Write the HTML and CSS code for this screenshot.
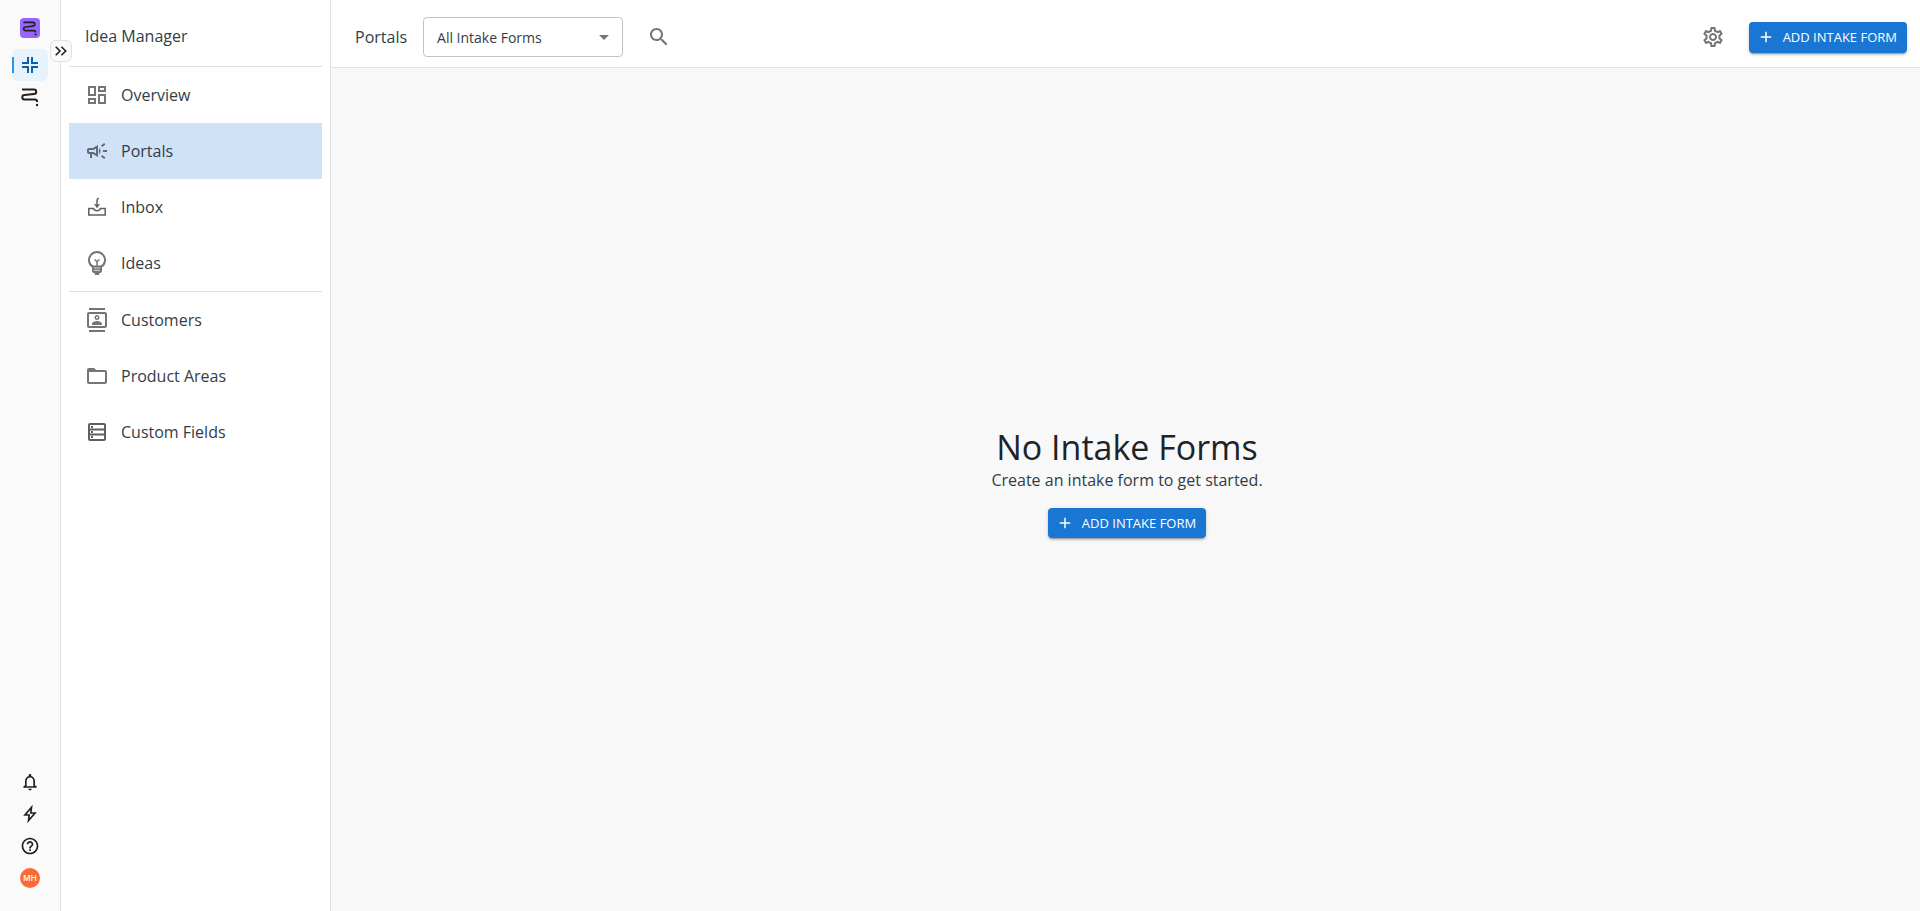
FILE: index.html
```html
<!DOCTYPE html>
<html lang="en">
<head>
  <meta charset="UTF-8" />
  <meta name="viewport" content="width=device-width, initial-scale=1.0"/>
  <title>Idea Manager</title>
  <link rel="stylesheet" href="styles.css">
</head>
<body>
  <aside class="rail">
    <div class="rail-group">
      <a href="#" class="logo">
        <svg width="20" height="20" viewBox="0 0 20 20"><path d="M3.500 4.300h9.300a1.900 1.900 0 0 1 0 3.800l-7.300.9a1.800 1.800 0 0 0 0 3.600h8.500q1.500 0 1.500 1.500v.5" /><circle cx="15.500" cy="16.500" r="1.100" /></svg>
      </a>
      <a href="#" class="rail-link active">
        <svg width="16" height="16" viewBox="0 0 16 16"><path d="M6 0v6H0M10 0v6h6M6 16v-6H0M10 16v-6h6" /></svg>
      </a>
      <a href="#" class="rail-link roadmap">
        <svg width="18" height="20" viewBox="0 0 18 20"><path d="M1 2.500h12a2.200 2.200 0 0 1 0 4.400l-9.500 1.200a2.200 2.200 0 0 0 0 4.400H14q2 0 2 2v.6" /><circle cx="16" cy="18" r="1.200" /></svg>
      </a>
    </div>
    <div class="rail-group rail-bottom">
      <svg class="icon" viewBox="0 0 24 24"><path d="M12 22c1.100 0 2-.9 2-2h-4c0 1.100.9 2 2 2zm6-6v-5c0-3.070-1.630-5.640-4.500-6.320V4c0-.83-.67-1.500-1.500-1.500s-1.500.67-1.500 1.500v.68C7.640 5.360 6 7.920 6 11v5l-2 1.500V19h16v-1.500L18 16zm-2 1H8v-6c0-2.480 1.510-4.500 4-4.500s4 2.020 4 4.500v6z"/></svg>
      <svg class="icon" viewBox="0 0 24 24"><path class="line" d="M13.800 4L6 13.200h5L10.200 20L18 10.800h-5z"/></svg>
      <svg class="icon" viewBox="0 0 24 24"><path d="M11 18h2v-2h-2v2zm1-16C6.480 2 2 6.480 2 12s4.480 10 10 10 10-4.480 10-10S17.520 2 12 2zm0 18c-4.410 0-8-3.590-8-8s3.590-8 8-8 8 3.590 8 8-3.590 8-8 8zm0-14c-2.210 0-4 1.790-4 4h2c0-1.100.9-2 2-2s2 .9 2 2c0 2-3 1.750-3 5h2c0-2.250 3-2.500 3-5 0-2.210-1.790-4-4-4z"/></svg>
      <div class="avatar">MH</div>
    </div>
    <button class="expand">
      <svg width="12" height="10" viewBox="0 0 12 10"><path d="M.7 .7L5 5L.7 9.300M6.400 .7L10.700 5L6.400 9.300" /></svg>
    </button>
  </aside>

  <nav class="sidebar">
    <h2 class="sidebar-title">Idea Manager</h2>
    <div class="nav-group">
      <a href="#" class="nav-link">
        <svg viewBox="0 0 24 24"><path d="M19 5v2h-4V5h4M9 5v6H5V5h4m10 8v6h-4v-6h4M9 17v2H5v-2h4M21 3h-8v6h8V3zM11 3H3v10h8V3zm10 8h-8v10h8V11zm-10 4H3v6h8v-6z"/></svg>
        Overview
      </a>
      <a href="#" class="nav-link active">
        <svg viewBox="0 0 24 24"><path d="M18 11v2h4v-2h-4zm-2 6.610c.96.710 2.210 1.650 3.200 2.390.4-.53.8-1.070 1.200-1.600-.99-.74-2.240-1.680-3.200-2.400-.4.540-.8 1.080-1.200 1.610zM20.400 5.600c-.4-.53-.8-1.070-1.200-1.600-.99.740-2.240 1.680-3.200 2.400.4.530.8 1.070 1.200 1.600.96-.72 2.210-1.650 3.200-2.400zM4 9c-1.100 0-2 .9-2 2v2c0 1.100.9 2 2 2h1v4h2v-4h1l5 3V6L8 9H4zm5.030 1.710L11 9.530v4.940l-1.970-1.180-.48-.29H4v-2h4.550l.48-.29zM15.500 12c0-1.330-.58-2.530-1.500-3.350v6.690c.92-.81 1.500-2.010 1.500-3.340z"/></svg>
        Portals
      </a>
      <a href="#" class="nav-link dark">
        <svg viewBox="0 0 24 24"><path class="line thin" d="M3.800 13.500h4.700c.5 1.400 1.700 2.200 3.500 2.200s3-.8 3.500-2.200h4.700v6.500H3.800z"/><path class="line thin" d="M13.800 3.200q-1.800.4-1.800 2.200v5"/><path d="M8.800 8.800L12 13.200l3.200-4.400-3.200 1z"/></svg>
        Inbox
      </a>
      <a href="#" class="nav-link">
        <svg viewBox="0 0 24 24"><path class="line" d="M8.500 16.200A8 8 0 1 1 15.500 16.200"/><path d="M7 14.500h10v5.500a2 2 0 0 1-2 2h-.5a2.500 2.500 0 0 1-5 0H9a2 2 0 0 1-2-2z"/><path class="line thin" d="M12 15v-4.500M9.500 8.500l2.500 2 2.500-2"/><path class="cut" d="M9 17h6M9 19.400h6"/></svg>
        Ideas
      </a>
    </div>
    <div class="nav-group">
      <a href="#" class="nav-link">
        <svg viewBox="0 0 24 24"><path d="M20 4H4c-1.100 0-2 .9-2 2v12c0 1.100.9 2 2 2h16c1.100 0 2-.9 2-2V6c0-1.100-.9-2-2-2zm0 14H4V6h16v12zM4 0h16v2H4zm0 22h16v2H4zm8-10c1.380 0 2.500-1.120 2.500-2.500S13.380 7 12 7 9.500 8.120 9.500 9.500 10.620 12 12 12zm0-3.500c.55 0 1 .45 1 1s-.45 1-1 1-1-.45-1-1 .45-1 1-1zm5 7.490C17 13.900 13.690 13 12 13s-5 .9-5 2.990V17h10v-1.010z"/></svg>
        Customers
      </a>
      <a href="#" class="nav-link">
        <svg viewBox="0 0 24 24"><path d="M9.170 4H4c-1.100 0-1.990.9-1.990 2L2 18c0 1.100.9 2 2 2h16c1.100 0 2-.9 2-2V8c0-1.100-.9-2-2-2h-8.830l-2-2zM20 18H4V8h16v10z"/></svg>
        Product Areas
      </a>
      <a href="#" class="nav-link dark">
        <svg viewBox="0 0 24 24"><path class="line" d="M4 5a1 1 0 0 1 1-1h14a1 1 0 0 1 1 1v14a1 1 0 0 1-1 1H5a1 1 0 0 1-1-1zM4 9.500h16M4 14.500h16"/><path class="line" d="M6 7h2M6 12h2M6 17h2"/></svg>
        Custom Fields
      </a>
    </div>
  </nav>

  <div class="content">
    <header class="header">
      <h1 class="page-title">Portals</h1>
      <div class="select">
        <span>All Intake Forms</span>
        <svg class="icon-md" viewBox="0 0 24 24"><path d="M7 10l5 5 5-5z"/></svg>
      </div>
      <svg class="icon-md" viewBox="0 0 24 24"><path d="M15.500 14h-.79l-.28-.27C15.410 12.590 16 11.110 16 9.500 16 5.910 13.090 3 9.500 3S3 5.910 3 9.500 5.910 16 9.500 16c1.610 0 3.090-.59 4.230-1.570l.27.280v.79l5 4.990L20.490 19l-4.990-5zm-6 0C7.010 14 5 11.990 5 9.500S7.010 5 9.500 5 14 7.010 14 9.500 11.990 14 9.500 14z"/></svg>
      <svg class="icon-md settings" viewBox="0 0 24 24"><path d="M19.430 12.980c.04-.32.070-.64.070-.98 0-.34-.03-.66-.07-.98l2.110-1.650c.19-.15.240-.42.120-.64l-2-3.460c-.09-.16-.26-.25-.44-.25-.06 0-.12.010-.17.030l-2.490 1c-.52-.4-1.080-.73-1.690-.98l-.38-2.650C14.460 2.180 14.250 2 14 2h-4c-.25 0-.46.180-.49.420l-.38 2.650c-.61.250-1.170.59-1.690.98l-2.490-1c-.06-.02-.12-.03-.18-.03-.17 0-.34.090-.43.250l-2 3.460c-.13.220-.07.490.12.640l2.110 1.650c-.04.320-.07.650-.07.980 0 .33.030.66.070.98l-2.110 1.650c-.19.150-.24.420-.12.640l2 3.460c.09.160.26.250.44.250.06 0 .12-.01.170-.03l2.490-1c.52.400 1.080.73 1.690.98l.38 2.650c.03.240.24.420.49.420h4c.25 0 .46-.18.49-.42l.38-2.650c.61-.25 1.170-.59 1.690-.98l2.490 1c.06.020.12.030.18.030.17 0 .34-.09.430-.25l2-3.460c.12-.22.070-.49-.12-.64l-2.110-1.650zm-1.980-1.710c.04.310.05.520.05.730 0 .21-.02.430-.05.730l-.14 1.130.89.700 1.080.84-.7 1.210-1.270-.51-1.040-.42-.9.680c-.43.320-.84.560-1.250.73l-1.060.43-.16 1.130-.2 1.350h-1.400l-.19-1.350-.16-1.130-1.060-.43c-.43-.18-.83-.41-1.230-.71l-.91-.7-1.060.43-1.270.51-.7-1.210 1.080-.84.890-.7-.14-1.130c-.03-.31-.05-.54-.05-.74s.02-.43.050-.73l.14-1.130-.89-.7-1.080-.84.7-1.210 1.270.51 1.040.42.900-.68c.43-.32.840-.56 1.250-.73l1.060-.43.160-1.130.2-1.350h1.390l.19 1.350.16 1.130 1.060.43c.43.180.83.410 1.230.71l.91.700 1.060-.43 1.270-.51.7 1.210-1.070.85-.89.700.14 1.130zM12 8c-2.210 0-4 1.790-4 4s1.790 4 4 4 4-1.790 4-4-1.790-4-4-4zm0 6c-1.100 0-2-.9-2-2s.9-2 2-2 2 .9 2 2-.9 2-2 2z"/></svg>
      <button class="btn">
        <svg viewBox="0 0 24 24"><path d="M19 13h-6v6h-2v-6H5v-2h6V5h2v6h6v2z"/></svg>
        Add Intake Form
      </button>
    </header>

    <main class="empty">
      <h2>No Intake Forms</h2>
      <p>Create an intake form to get started.</p>
      <button class="btn">
        <svg viewBox="0 0 24 24"><path d="M19 13h-6v6h-2v-6H5v-2h6V5h2v6h6v2z"/></svg>
        Add Intake Form
      </button>
    </main>
  </div>
</body>
</html>
```
FILE: styles.css
```css
* {
  box-sizing: border-box;
}
body {
  font-family: 'Open Sans', sans-serif;
  font-size: 16px;
  margin: 0;
  display: flex;
  height: 100vh;
  overflow: hidden;
  color: #323d47;
  background: #f8f8f8;
}
h1, h2, p {
  margin: 0;
  font-weight: 400;
}
svg {
  display: block;
  flex-shrink: 0;
  fill: currentColor;
}
.line {
  fill: none;
  stroke: currentColor;
  stroke-width: 2;
}
.line.thin {
  stroke-width: 1.5;
}
.cut {
  stroke: #fff;
  stroke-width: .7;
}

/* Rail */
.rail {
  position: relative;
  width: 61px;
  flex-shrink: 0;
  background: #fafafa;
  border-right: 1px solid #e0e0e0;
  display: flex;
  flex-direction: column;
  justify-content: space-between;
  padding: 18px 0 23px;
  color: #1f1f1f;
}
.rail-group {
  display: flex;
  flex-direction: column;
  align-items: center;
}
.logo {
  width: 20px;
  height: 20px;
  border-radius: 4px;
  background: #9765ff;
  color: #1f1f1f;
  margin-bottom: 11px;
}
.logo path,
.roadmap path {
  fill: none;
  stroke: currentColor;
  stroke-width: 2;
}
.logo path {
  stroke-width: 1.7;
}
.rail-link {
  width: 36px;
  height: 32px;
  border-radius: 6px;
  display: flex;
  align-items: center;
  justify-content: center;
  color: #1f1f1f;
}
.rail-link.active {
  background: linear-gradient(#2196f3, #2196f3) left center / 2px 16px no-repeat #e6f3fc;
  color: #0860ae;
}
.rail-link.active path {
  fill: none;
  stroke: currentColor;
  stroke-width: 2;
}
.rail-bottom {
  gap: 12px;
}
.icon {
  width: 20px;
  height: 20px;
}
.avatar {
  width: 20px;
  height: 20px;
  border-radius: 50%;
  background: #fa6a34;
  color: #fff;
  font: 500 8px/20px Inter, sans-serif;
  text-align: center;
}
.expand {
  position: absolute;
  top: 40px;
  left: 50px;
  width: 22px;
  height: 22px;
  padding: 0;
  border: 1px solid #e0e0e0;
  border-radius: 6px;
  background: #fafafa;
  color: #1f1f1f;
  display: flex;
  align-items: center;
  justify-content: center;
}
.expand path {
  fill: none;
  stroke: currentColor;
  stroke-width: 1.6;
}

/* Sidebar */
.sidebar {
  width: 270px;
  flex-shrink: 0;
  padding: 0 8px;
  background: #fff;
  border-right: 1px solid #e0e0e0;
}
.sidebar-title {
  height: 66px;
  padding: 24px 16px 0;
  font-size: 16px;
  line-height: 24px;
}
.nav-group {
  border-top: 1px solid #e0e0e0;
}
.nav-link {
  height: 56px;
  padding: 0 16px;
  display: flex;
  align-items: center;
  gap: 12px;
  color: inherit;
  text-decoration: none;
}
.nav-link.active {
  background: #d0e2f8;
}
.nav-link svg {
  width: 24px;
  height: 24px;
  color: #757575;
}
.nav-link.active svg,
.nav-link.dark svg {
  color: #616a73;
}
.nav-link.dark svg {
  color: #5a6066;
}

/* Content */
.content {
  flex: 1;
  display: flex;
  flex-direction: column;
}
.header {
  height: 68px;
  padding: 7px 13px 0 24px;
  display: flex;
  align-items: center;
  background: #fff;
  border-bottom: 1px solid #e0e0e0;
}
.page-title {
  font-size: 16px;
  margin-right: 16px;
}
.select {
  width: 200px;
  height: 40px;
  margin-right: 24px;
  padding: 0 6px 0 13px;
  display: flex;
  align-items: center;
  justify-content: space-between;
  border: 1px solid #c4c4c4;
  border-radius: 4px;
  font-size: 14px;
}
.icon-md {
  width: 24px;
  height: 24px;
  color: #757575;
}
.settings {
  margin-left: auto;
  margin-right: 24px;
}
.btn {
  height: 31px;
  padding: 0 10px 0 8px;
  display: inline-flex;
  align-items: center;
  gap: 8px;
  border: none;
  border-radius: 4px;
  background: #1976d2;
  color: #fff;
  font: 500 13px/23px 'Open Sans', sans-serif;
  text-transform: uppercase;
  box-shadow: 0 3px 1px -2px rgba(0,0,0,.2), 0 2px 2px 0 rgba(0,0,0,.14), 0 1px 5px 0 rgba(0,0,0,.12);
  cursor: pointer;
}
.btn svg {
  width: 18px;
  height: 18px;
}
.empty {
  flex: 1;
  display: flex;
  flex-direction: column;
  align-items: center;
  justify-content: center;
  padding: 0 0 15px 3px;
}
.empty h2 {
  font-size: 34px;
  line-height: 42px;
  color: #1d2329;
}
.empty p {
  line-height: 24px;
  margin-bottom: 16px;
}
.empty .btn {
  height: 30px;
}
```
